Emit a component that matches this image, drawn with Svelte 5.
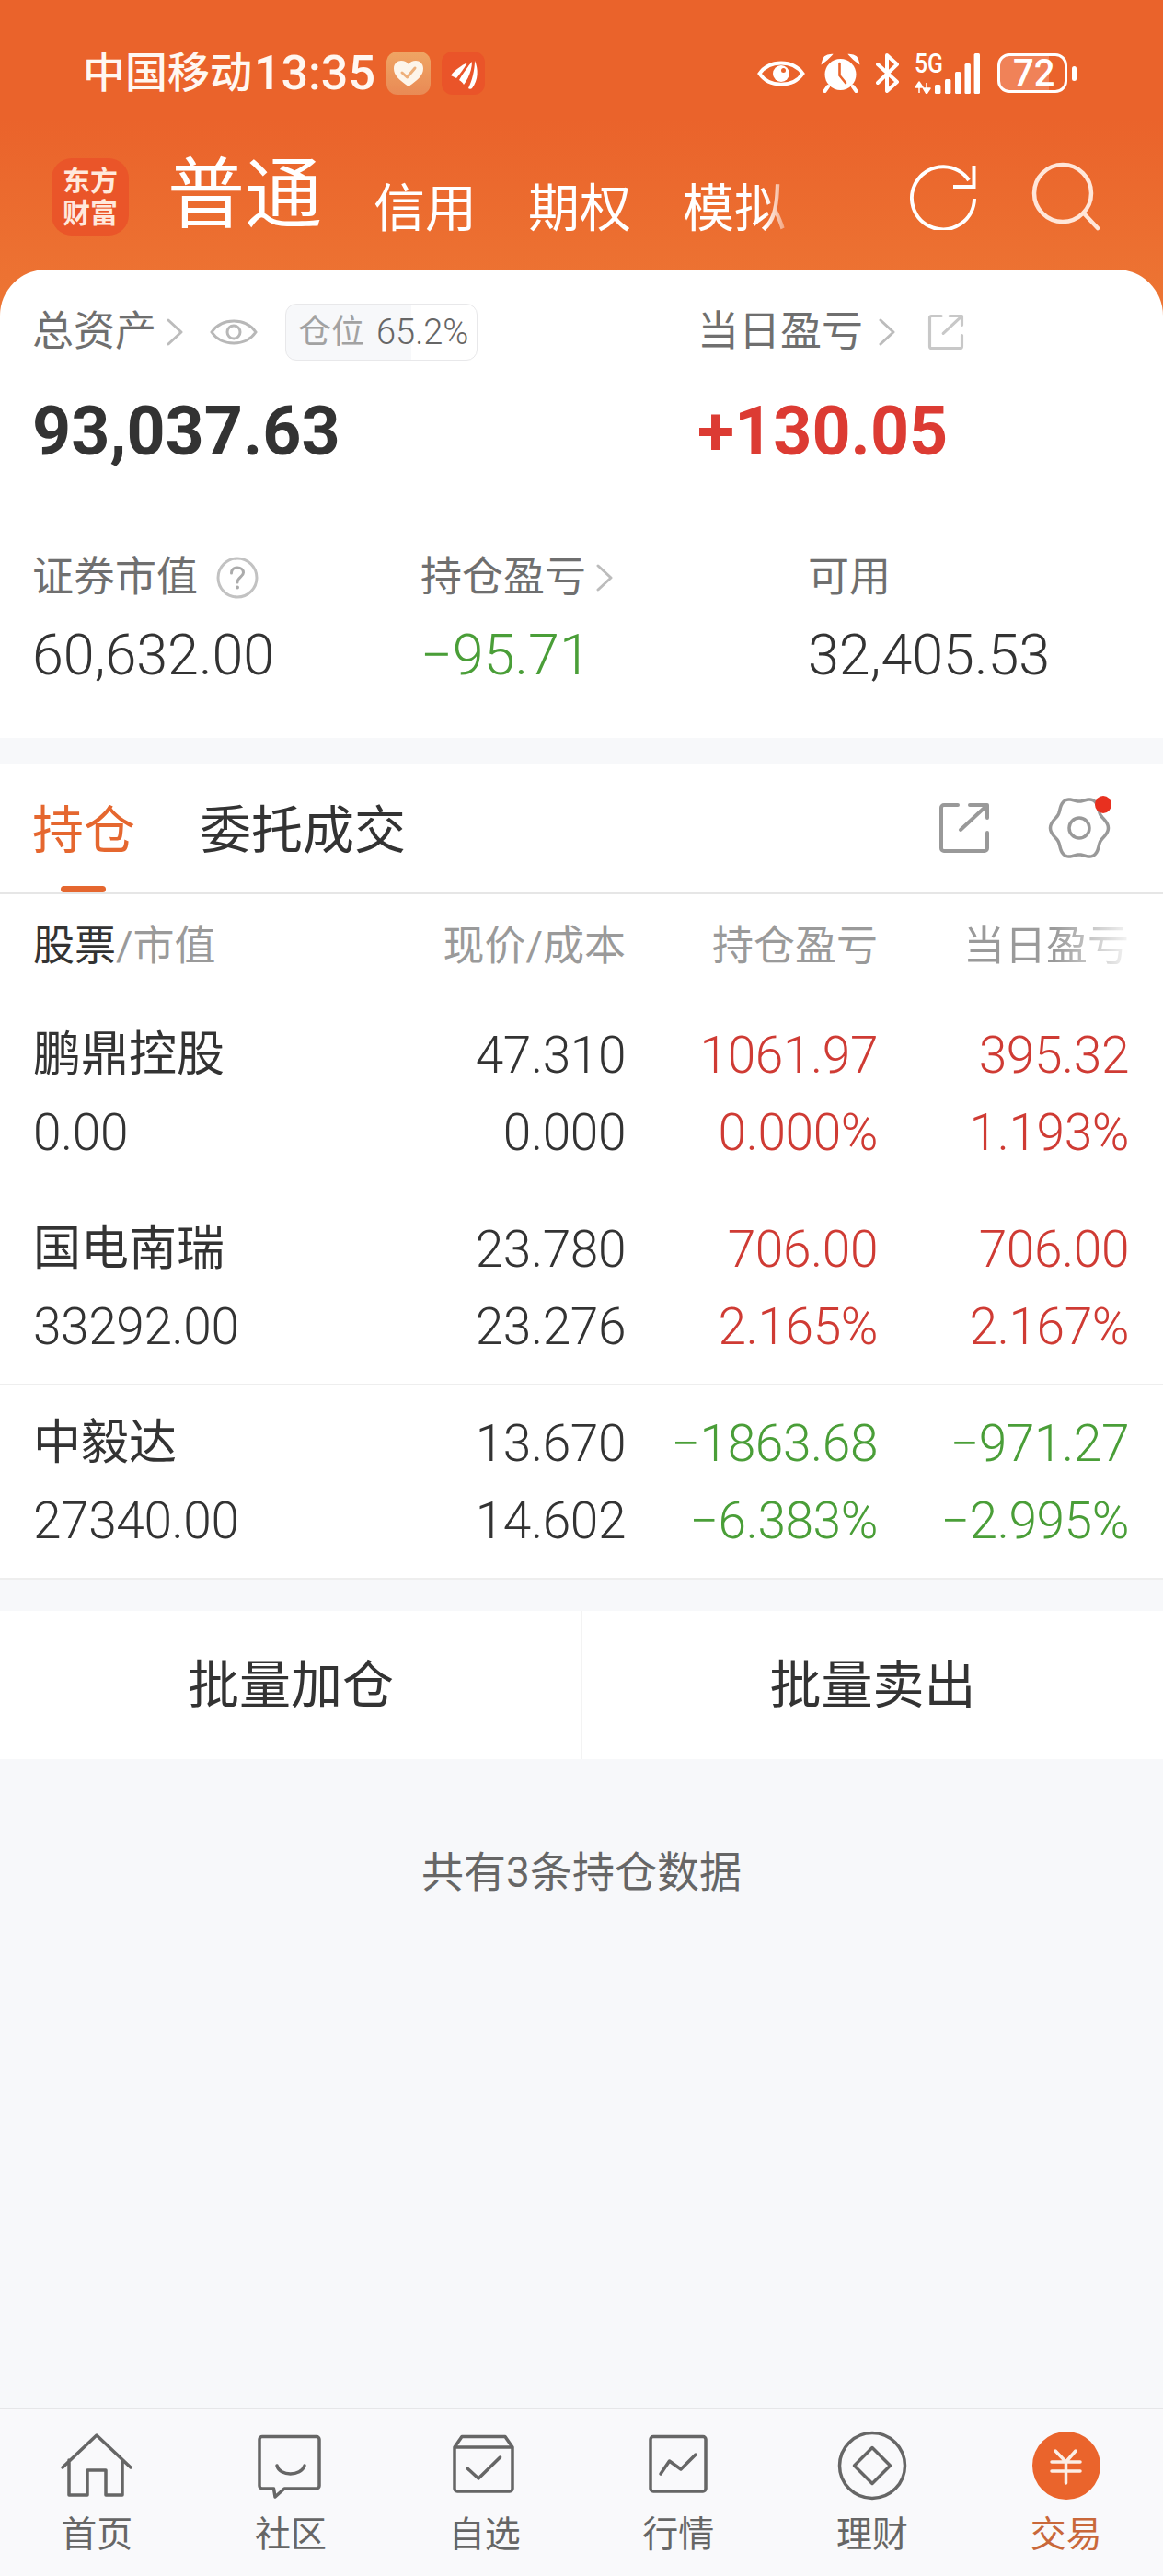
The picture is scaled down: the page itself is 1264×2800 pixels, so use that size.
<script>
	const stocks = [
		{ name: '鹏鼎控股', value: '0.00', price: '47.310', cost: '0.000', pos: '1061.97', posPct: '0.000%', day: '395.32', dayPct: '1.193%', tone: 'up' },
		{ name: '国电南瑞', value: '33292.00', price: '23.780', cost: '23.276', pos: '706.00', posPct: '2.165%', day: '706.00', dayPct: '2.167%', tone: 'up' },
		{ name: '中毅达', value: '27340.00', price: '13.670', cost: '14.602', pos: '−1863.68', posPct: '−6.383%', day: '−971.27', dayPct: '−2.995%', tone: 'down' }
	];

	// wavy outline of the settings cog, six lobes, slightly taller than wide
	const cog = Array.from({ length: 96 }, (_, i) => {
		const a = (i / 96) * Math.PI * 2;
		const r = 29 + 2.5 * Math.cos(6 * a);
		return `${i ? 'L' : 'M'}${(36 + r * Math.cos(a)).toFixed(2)} ${(36 + r * 1.09 * Math.sin(a)).toFixed(2)}`;
	}).join('') + 'Z';
</script>

{#snippet share(size, width)}
	<svg class="share" width={size} height={size} viewBox="0 0 60 60" fill="none" stroke="currentColor" stroke-width={width} stroke-linecap="round" stroke-linejoin="round">
		<path d="M23 5H8a3 3 0 0 0-3 3v44a3 3 0 0 0 3 3h44a3 3 0 0 0 3-3V35" />
		<path d="M26 32L54 6M36 5H55V19" />
	</svg>
{/snippet}

{#snippet chevron()}
	<svg class="chevron" width="20" height="30" viewBox="0 0 20 30" fill="none" stroke="#bcbcbc" stroke-width="3" stroke-linecap="round" stroke-linejoin="round">
		<path d="M3 2L17 15L3 28" />
	</svg>
{/snippet}

<div class="page">
	<header class="top">
		<div class="status">
			<span class="carrier">中国移动</span>
			<span class="clock">13:35</span>
			<svg class="badge-heart" width="48" height="47" viewBox="0 0 48 47">
				<defs>
					<linearGradient id="hb" x1="0" y1="0" x2="0" y2="1">
						<stop offset="0" stop-color="#efa564" />
						<stop offset="1" stop-color="#e98a55" />
					</linearGradient>
				</defs>
				<rect width="48" height="47" rx="12" fill="url(#hb)" />
				<path d="M24 38C14 31 8 26 8 18.500C8 13 12 10 16 10C19.500 10 22.500 11.500 24 14C25.500 11.500 28.500 10 32 10C36 10 40 13 40 18.500C40 26 34 31 24 38Z" fill="#fdf5ea" />
				<path d="M17 23L22.500 28L31 18" fill="none" stroke="#eeb07a" stroke-width="3" stroke-linecap="round" stroke-linejoin="round" />
			</svg>
			<svg class="badge-wing" width="47" height="47" viewBox="0 0 47 47">
				<rect width="47" height="47" rx="12" fill="#ea5429" />
				<path d="M10 26C14 20 22 15 28 12C24 19 20 24 16 29C14 28 12 27 10 26Z" fill="#fff" />
				<path d="M19 31C23 24 28 17 33 11C33 19 30 28 24 36C23 34 21 32 19 31Z" fill="#fff" />
				<path d="M29 40C33 32 36 20 36 10C40 19 40 31 33 40C32 41 30 41 29 40Z" fill="#fff" />
			</svg>
			<div class="status-right">
				<svg width="52" height="36" viewBox="0 0 52 36" fill="none" stroke="#fff" stroke-width="4">
					<path d="M2.500 18C13 2.500 39 2.500 49.500 18C39 33.500 13 33.500 2.500 18Z" />
					<circle cx="26" cy="18" r="9" fill="#fff" stroke="none" />
					<circle cx="28.500" cy="14.500" r="2.500" fill="#ea642b" stroke="none" />
				</svg>
				<svg width="43" height="43" viewBox="0 0 43 43" fill="none" stroke="#fff" stroke-linecap="round">
					<circle cx="21.500" cy="23" r="17" fill="#fff" stroke="none" />
					<path d="M1.500 11C2 5 6 1.500 12 1.500C9 5 5.500 8 1.500 11ZM41.500 11C41 5 37 1.500 31 1.500C34 5 37.500 8 41.500 11Z" fill="#fff" stroke-width="1.500" />
					<path d="M8 36L4.500 41M35 36L38.500 41" stroke-width="4" />
					<path d="M20.500 11V24L27 32" stroke="#ea642b" stroke-width="2.600" stroke-linejoin="round" />
				</svg>
				<svg width="25" height="43" viewBox="0 0 25 43" fill="none" stroke="#fff" stroke-width="4" stroke-linecap="round" stroke-linejoin="round">
					<path d="M2 12L23 31L12 41V2L23 12L2 32" />
				</svg>
				<svg class="signal" width="73" height="52" viewBox="0 -8 73 52">
					<text x="0" y="21" class="net" textLength="31" lengthAdjust="spacingAndGlyphs">5G</text>
					<path d="M5 43V32M5 31L1 37H9ZM13 32V43M13 44L9.500 38H17Z" fill="#fff" stroke="#fff" stroke-width="1.500" stroke-linejoin="round" />
					<rect x="22" y="34" width="6.400" height="10" rx="1.500" fill="#fff" />
					<rect x="33" y="28" width="6.400" height="16" rx="1.500" fill="#fff" />
					<rect x="44" y="20" width="6.400" height="24" rx="1.500" fill="#fff" />
					<rect x="54.500" y="11" width="6.400" height="33" rx="1.500" fill="#fff" />
					<rect x="64.600" y="0" width="6.400" height="44" rx="1.500" fill="#fff" />
				</svg>
				<div class="battery"><span>72</span></div>
				<i class="battery-tip"></i>
			</div>
		</div>

		<nav class="modes">
			<div class="logo"><span>东方</span><span>财富</span></div>
			<span class="mode-current">普通</span>
			<span class="mode">信用</span>
			<span class="mode">期权</span>
			<span class="mode mode-fade">模拟</span>
			<svg class="refresh" width="72" height="72" viewBox="0 0 72 72" fill="none" stroke="#fff" stroke-width="4">
				<path d="M64 18A34 34 0 1 0 70 38" />
				<path d="M69.500 2V25H47" />
			</svg>
			<svg class="search" width="76" height="78" viewBox="0 0 76 78" fill="none" stroke="#ffe6d9" stroke-width="4.500" stroke-linecap="round">
				<circle cx="35" cy="36" r="31" />
				<path d="M58 58L73 74" />
			</svg>
		</nav>

		<section class="summary">
			<div class="summary-main">
				<div class="field">
					<div class="label">
						<span>总资产</span>
						{@render chevron()}
						<svg class="eye" width="52" height="36" viewBox="0 0 52 36" fill="none" stroke="#b8b8b8" stroke-width="3">
							<path d="M2 18C13 2 39 2 50 18C39 34 13 34 2 18Z" />
							<circle cx="26" cy="18" r="7" />
						</svg>
						<div class="ratio"><span class="ratio-name">仓位</span><span class="ratio-value">65.2%</span></div>
					</div>
					<div class="big">93,037.63</div>
				</div>
				<div class="field">
					<div class="label">
						<span class="label-day">当日盈亏</span>
						{@render chevron()}
						<span class="label-share">{@render share(42, 4.5)}</span>
					</div>
					<div class="big up-strong">+130.05</div>
				</div>
			</div>
			<div class="summary-sub">
				<div class="field">
					<div class="label">
						<span>证券市值</span>
						<svg class="help" width="46" height="46" viewBox="0 0 46 46">
							<circle cx="23" cy="23" r="21" fill="none" stroke="#c2c2c2" stroke-width="3" />
							<path d="M16.500 18C16.500 14 19.500 12 23 12C26.500 12 29.500 14 29.500 17.500C29.500 22 23 22.500 23 28" fill="none" stroke="#ababab" stroke-width="3" stroke-linecap="round" />
							<circle cx="23" cy="33.500" r="2" fill="#ababab" />
						</svg>
					</div>
					<div class="mid">60,632.00</div>
				</div>
				<div class="field">
					<div class="label"><span>持仓盈亏</span>{@render chevron()}</div>
					<div class="mid down">−95.71</div>
				</div>
				<div class="field">
					<div class="label"><span>可用</span></div>
					<div class="mid">32,405.53</div>
				</div>
			</div>
		</section>
	</header>

	<section class="holdings">
		<div class="tabs">
			<span class="tab tab-on">持仓</span>
			<span class="tab">委托成交</span>
			<div class="tab-tools">
				{@render share(60, 4)}
				<div class="cog">
					<svg width="72" height="72" viewBox="0 0 72 72" fill="none" stroke="#999" stroke-width="3.500">
						<path d={cog} />
						<circle cx="36" cy="36" r="11" />
					</svg>
					<i class="dot"></i>
				</div>
			</div>
		</div>

		<div class="row head">
			<div><span class="dark">股票</span>/市值</div>
			<div class="num">现价/成本</div>
			<div class="num">持仓盈亏</div>
			<div class="num"><span class="head-fade">当日盈亏</span></div>
		</div>

		{#each stocks as s}
			<div class="row stock">
				<div class="cell">
					<span class="name">{s.name}</span>
					<span>{s.value}</span>
				</div>
				<div class="cell num">
					<span>{s.price}</span>
					<span>{s.cost}</span>
				</div>
				<div class="cell num {s.tone}">
					<span>{s.pos}</span>
					<span>{s.posPct}</span>
				</div>
				<div class="cell num {s.tone}">
					<span>{s.day}</span>
					<span>{s.dayPct}</span>
				</div>
			</div>
		{/each}
	</section>

	<div class="actions">
		<div class="action">批量加仓</div>
		<div class="action">批量卖出</div>
	</div>

	<p class="note">共有3条持仓数据</p>

	<footer class="tabbar">
		<div class="tabbar-item">
			<svg viewBox="0 0 80 80" width="80" height="80">
				<path d="M3 42L40 7L77 42M10 34V72H30V45H50V72H68V34" />
			</svg>
			<span>首页</span>
		</div>
		<div class="tabbar-item">
			<svg viewBox="0 0 80 80" width="80" height="80">
				<path d="M9 8.500H68a3 3 0 0 1 3 3V62a3 3 0 0 1-3 3H33L23 74L21.500 65H9a3 3 0 0 1-3-3V11.500a3 3 0 0 1 3-3Z" />
				<path d="M25 40C28 52 51 52 55 40" />
			</svg>
			<span>社区</span>
		</div>
		<div class="tabbar-item">
			<svg viewBox="0 0 80 80" width="80" height="80">
				<path d="M7 20L15 8.500H62L70 20V65a3 3 0 0 1-3 3H10a3 3 0 0 1-3-3ZM7 20H70" />
				<path d="M21 43L33 54L56.500 31" />
			</svg>
			<span>自选</span>
		</div>
		<div class="tabbar-item">
			<svg viewBox="0 0 80 80" width="80" height="80">
				<rect x="10" y="8.500" width="60" height="59.500" rx="3" />
				<path d="M21 49L30.500 35L43 44L59 28" />
			</svg>
			<span>行情</span>
		</div>
		<div class="tabbar-item">
			<svg viewBox="0 0 80 80" width="80" height="80">
				<circle cx="40" cy="40" r="35.500" />
				<path d="M40 20.500L59.500 40L40 59.500L20.500 40Z" />
			</svg>
			<span>理财</span>
		</div>
		<div class="tabbar-item tabbar-on">
			<svg viewBox="0 0 80 80" width="80" height="80">
				<circle cx="40" cy="40" r="37" />
				<path d="M28 24L39.500 36L50 24M24 36H55M24 46H55M39.500 36V59" />
			</svg>
			<span>交易</span>
		</div>
	</footer>
</div>

<style>
	:global(body) {
		margin: 0;
		background: #f7f8fa;
	}

	.page {
		display: flex;
		flex-direction: column;
		width: 1264px;
		min-height: 2800px;
		background: #f7f8fa;
		font-family: Roboto, 'Noto Sans CJK SC', sans-serif;
		color: #333;
	}

	.top {
		background: linear-gradient(180deg, #ea632b 0, #ea632b 130px, #ed7634 343px);
	}

	/* status bar */
	.status {
		display: flex;
		align-items: center;
		height: 47px;
		padding: 56px 94px 0 90px;
		color: #fff7f1;
	}

	.carrier {
		font-size: 46px;
		font-weight: 500;
		line-height: 47px;
	}

	.clock {
		margin: 0 12px 0 2px;
		font-size: 52px;
		font-weight: 500;
		line-height: 47px;
	}

	.badge-wing {
		margin-left: 12px;
	}

	.status-right {
		display: flex;
		align-items: center;
		gap: 17px;
		margin-left: auto;
	}

	.signal {
		margin-top: -8px;
	}

	.net {
		fill: #fff;
		font-family: Roboto, sans-serif;
		font-size: 29px;
		font-weight: 500;
	}

	.battery {
		box-sizing: border-box;
		display: flex;
		align-items: center;
		width: 76px;
		height: 43px;
		padding-left: 14px;
		border: 3.500px solid #fff;
		border-radius: 13px;
		background: linear-gradient(90deg, #f08258 76%, transparent 76%);
		color: #fff;
		font-size: 40px;
		font-weight: 500;
		line-height: 36px;
	}

	.battery-tip {
		width: 5px;
		height: 16px;
		margin-left: -12px;
		border-radius: 3px;
		background: #fff;
	}

	/* account switcher */
	.modes {
		display: flex;
		align-items: flex-start;
		height: 121px;
		padding: 69px 68px 0 56px;
		color: #fff;
	}

	.logo {
		display: flex;
		flex-direction: column;
		align-items: center;
		justify-content: center;
		width: 84px;
		height: 84px;
		border-radius: 22px;
		background: #ea5529;
		color: #ffe9dc;
		font-size: 30px;
		font-weight: 700;
		line-height: 35px;
	}

	.mode-current {
		margin: -1px 56px 0 42px;
		font-size: 84px;
		line-height: 84px;
	}

	.mode {
		margin: 27px 56px 0 0;
		font-size: 56px;
		line-height: 56px;
	}

	.mode-fade {
		mask-image: linear-gradient(90deg, #000 80%, rgba(0, 0, 0, 0.35) 100%);
	}

	.refresh {
		margin: 6px 0 0 auto;
	}

	.search {
		margin: 2px 0 0 59px;
	}

	/* summary card */
	.summary {
		padding: 37px 0 55px 35px;
		border-radius: 50px 50px 0 0;
		background: #fff;
	}

	.summary-main {
		display: grid;
		grid-template-columns: 723px 1fr;
	}

	.summary-sub {
		display: grid;
		grid-template-columns: 422px 421px 1fr;
		margin-top: 88px;
	}

	.label {
		display: flex;
		align-items: center;
		height: 62px;
		color: #6f6f6f;
		font-size: 45px;
		line-height: 62px;
	}

	.label-day {
		margin-right: 6px;
	}

	.chevron {
		margin-left: 10px;
	}

	.eye {
		margin-left: 28px;
	}

	.label-share {
		display: flex;
		margin-left: 33px;
		color: #c8c8c8;
	}

	.help {
		margin-left: 20px;
	}

	.ratio {
		box-sizing: border-box;
		display: flex;
		align-items: center;
		width: 209px;
		height: 62px;
		margin-left: 30px;
		padding-left: 13px;
		border: 1.500px solid #e8e8ea;
		border-radius: 12px;
		background: linear-gradient(90deg, #f7f8fa 65.5%, #fff 65.5%);
		font-size: 36px;
	}

	.ratio-name {
		color: #a2a2a2;
	}

	.ratio-value {
		margin-left: 13px;
		color: #666;
		font-size: 38px;
		font-weight: 300;
	}

	.big {
		margin-top: 37px;
		font-size: 73.500px;
		font-weight: 700;
		line-height: 80px;
	}

	.mid {
		margin-top: 18px;
		font-size: 61px;
		font-weight: 300;
		line-height: 70px;
	}

	.up-strong {
		color: #dc3b33;
	}

	.up {
		color: #cf3b34;
	}

	.down {
		color: #4a9e38;
	}

	/* holdings table */
	.holdings {
		margin-top: 28px;
		background: #fff;
		border-bottom: 2px solid #eee;
	}

	.tabs {
		display: flex;
		align-items: center;
		height: 140px;
		padding: 0 55px 0 35px;
		border-bottom: 2px solid #e6e6e6;
	}

	.tab {
		position: relative;
		margin-right: 70px;
		padding-top: 6px;
		font-size: 56px;
		line-height: 134px;
	}

	.tab-on {
		color: #e5672f;
	}

	.tab-on::after {
		content: '';
		position: absolute;
		left: 31px;
		bottom: 0;
		width: 49px;
		height: 7px;
		border-radius: 4px;
		background: #e5672f;
	}

	.tab-tools {
		display: flex;
		align-items: center;
		gap: 59px;
		margin-left: auto;
		color: #999;
	}

	.cog {
		position: relative;
		height: 72px;
	}

	.dot {
		position: absolute;
		top: 1px;
		right: 1px;
		width: 18px;
		height: 19px;
		border-radius: 50%;
		background: #e8301f;
	}

	.row {
		display: grid;
		grid-template-columns: 403px 241px 274px 273px;
		padding: 0 37px 0 36px;
	}

	.head {
		box-sizing: border-box;
		align-items: center;
		height: 111px;
		padding-bottom: 6px;
		color: #9a9a9a;
		font-size: 45px;
	}

	.dark {
		color: #333;
	}

	.head-fade {
		mask-image: linear-gradient(90deg, #000 55%, rgba(0, 0, 0, 0.1) 100%);
	}

	.stock {
		padding-top: 22px;
		padding-bottom: 20px;
		border-bottom: 1px solid #eee;
	}

	.stock:last-child {
		border-bottom: 0;
	}

	.cell {
		display: flex;
		flex-direction: column;
		font-size: 55px;
		font-weight: 300;
		letter-spacing: -0.4px;
		line-height: 84px;
	}

	.name {
		font-size: 52px;
		font-weight: 400;
		letter-spacing: 0;
	}

	.num {
		text-align: right;
	}

	/* bulk actions */
	.actions {
		display: grid;
		grid-template-columns: 1fr 1fr;
		margin-top: 34px;
		background: #fff;
	}

	.action {
		padding-top: 1px;
		font-size: 56px;
		line-height: 160px;
		text-align: center;
	}

	.action + .action {
		border-left: 1px solid #f3f3f3;
	}

	.note {
		margin: 101px 0 0;
		color: #666;
		font-size: 46px;
		line-height: 44px;
		text-align: center;
	}

	/* bottom navigation */
	.tabbar {
		display: grid;
		grid-template-columns: repeat(6, 1fr);
		height: 181px;
		margin-top: auto;
		border-top: 2px solid #e6e6e8;
		background: #f9f9fb;
	}

	.tabbar-item {
		display: flex;
		flex-direction: column;
		align-items: center;
		padding-top: 21px;
		color: #666;
		font-size: 39px;
		line-height: 40px;
	}

	.tabbar-item svg {
		margin-bottom: 15px;
		fill: none;
		stroke: #666;
		stroke-width: 3.500;
		stroke-linecap: round;
		stroke-linejoin: round;
	}

	.tabbar-on {
		color: #c9683a;
	}

	.tabbar-on circle {
		fill: #ea642c;
		stroke: none;
	}

	.tabbar-on path {
		stroke: #fbeee6;
	}
</style>
